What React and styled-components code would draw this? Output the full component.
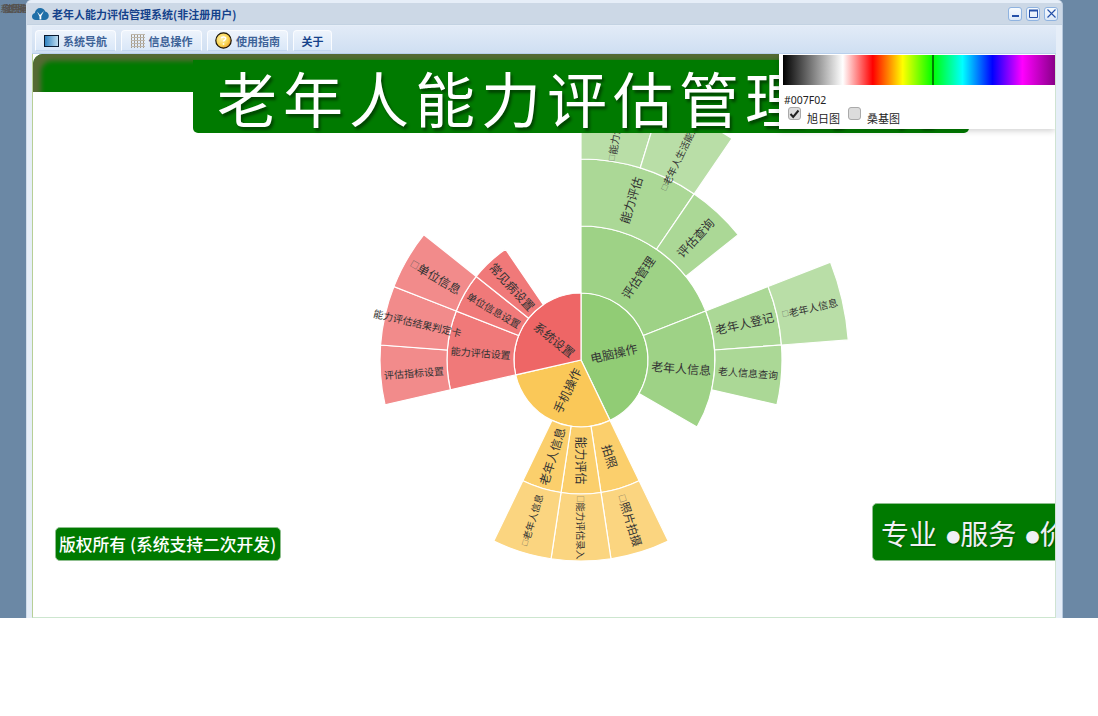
import React from 'react';
import styled, { createGlobalStyle } from 'styled-components';

const GlobalStyle = createGlobalStyle`
    html, body {
        margin: 0;
        padding: 0;
        background: #fff;
        font-family: "Noto Sans CJK SC", "Liberation Sans", sans-serif;
    }
`;

const CX = 548;
const CY = 306;
const RINGS = [[0, 67], [67, 134], [134, 201], [201, 268]];
const OPACITY = [1, 0.88, 0.76, 0.64];
const U = 360 / 21;

const GREEN = '#91cc75';
const ORANGE = '#fac858';
const RED = '#ee6666';

// depth, start unit, end unit, colour, label, font size
const sectors = [
    [0, 0, 9, GREEN, '电脑操作', 12],
    [1, 0, 4, GREEN, '评估管理', 12],
    [1, 4, 7, GREEN, '老年人信息', 12],
    [2, 0, 2, GREEN, '能力评估', 12],
    [2, 2, 3, GREEN, '评估查询', 12],
    [2, 4, 5, GREEN, '老年人登记', 12],
    [2, 5, 6, GREEN, '老人信息查询', 10],
    [3, 0, 1, GREEN, '□能力评估录入', 10],
    [3, 1, 2, GREEN, '□老年人生活能力评估', 9.5],
    [3, 4, 5, GREEN, '□老年人信息', 10],
    [0, 9, 15, ORANGE, '手机操作', 12],
    [1, 9, 10, ORANGE, '拍照', 12],
    [1, 10, 11, ORANGE, '能力评估', 12],
    [1, 11, 12, ORANGE, '老年人信息', 12],
    [2, 9, 10, ORANGE, '□照片拍摄', 11.5],
    [2, 10, 11, ORANGE, '□能力评估录入', 9.5],
    [2, 11, 12, ORANGE, '□老年人信息', 9.5],
    [0, 15, 21, RED, '系统设置', 12],
    [1, 15, 17, RED, '能力评估设置', 10],
    [1, 17, 18, RED, '单位信息设置', 10],
    [1, 18, 19, RED, '常见病设置', 12],
    [2, 15, 16, RED, '评估指标设置', 10],
    [2, 16, 17, RED, '能力评估结果判定卡', 10],
    [2, 17, 18, RED, '□单位信息', 12],
];

const polar = (r, deg) => {
    const a = (deg * Math.PI) / 180;
    return [CX + r * Math.sin(a), CY - r * Math.cos(a)];
};

const arcPath = (r0, r1, a0, a1) => {
    const large = a1 - a0 > 180 ? 1 : 0;
    const [x0, y0] = polar(r1, a0);
    const [x1, y1] = polar(r1, a1);
    const [x2, y2] = polar(r0, a1);
    const [x3, y3] = polar(r0, a0);
    if (r0 === 0) {
        return `M${CX} ${CY}L${x0} ${y0}A${r1} ${r1} 0 ${large} 1 ${x1} ${y1}Z`;
    }
    return `M${x0} ${y0}A${r1} ${r1} 0 ${large} 1 ${x1} ${y1}L${x2} ${y2}A${r0} ${r0} 0 ${large} 0 ${x3} ${y3}Z`;
};

const Sunburst = () => (
    <ChartSvg viewBox="0 0 1023 563">
        {sectors.map(([depth, s, e, color]) => (
            <path
                key={`${depth}-${s}-${color}`}
                d={arcPath(RINGS[depth][0], RINGS[depth][1], s * U, e * U)}
                fill={color}
                fillOpacity={OPACITY[depth]}
                stroke="#fff"
                strokeWidth="1.2"
            />
        ))}
        {sectors.map(([depth, s, e, , label, size]) => {
            const mid = ((s + e) / 2) * U;
            const r = (RINGS[depth][0] + RINGS[depth][1]) / 2;
            const [x, y] = polar(r, mid);
            const rot = mid <= 180 ? mid - 90 : mid - 270;
            const missing = label.startsWith('□');
            return (
                <ChartLabel
                    key={label + s + depth}
                    x={x}
                    y={y}
                    fontSize={size}
                    transform={`rotate(${rot} ${x} ${y})`}
                >
                    {missing && <tspan fontSize={size * 0.7} fill="#555">□</tspan>}
                    {missing ? label.slice(1) : label}
                </ChartLabel>
            );
        })}
    </ChartSvg>
);

const AppLogo = () => (
    <svg width="17" height="14" viewBox="0 0 17 14">
        <path d="M4 13C1.500 13 0 11.400 0 9.400 0 7.600 1.200 6.300 2.800 6 3.200 3 5.400 1 8.200 1c2.400 0 4.300 1.400 5 3.500 2 .3 3.600 2 3.600 4.200 0 2.500-1.900 4.300-4.300 4.300Z" fill="#1f6fa8" />
        <path d="M5 4.500l3 3.500L12 4l-2.700 5V12.500H7.500V9.500Z" fill="#fff" />
    </svg>
);

const MonitorIcon = () => (
    <svg width="15" height="12" viewBox="0 0 15 12">
        <defs>
            <linearGradient id="screen" x1="0" y1="0" x2="1" y2="0">
                <stop offset="0" stopColor="#2a7fc0" />
                <stop offset="1" stopColor="#c4e0f2" />
            </linearGradient>
        </defs>
        <rect x="0.5" y="0.5" width="14" height="11" fill="url(#screen)" stroke="#0a1a30" />
    </svg>
);

const GridIcon = () => (
    <svg width="14" height="14" viewBox="0 0 14 14">
        {[0.5, 3.5, 6.5, 9.5, 12.5].map((v) => (
            <path key={`v${v}`} d={`M${v} 0V14`} stroke="#a39b8c" strokeWidth="1" />
        ))}
        {[0.5, 3.5, 6.5, 9.5, 12.5].map((v) => (
            <path key={`h${v}`} d={`M0 ${v}H14`} stroke="#bdb6aa" strokeWidth="1" />
        ))}
    </svg>
);

const HelpIcon = () => (
    <svg width="17" height="17" viewBox="0 0 17 17">
        <defs>
            <radialGradient id="coin" cx="0.4" cy="0.4" r="0.65">
                <stop offset="0" stopColor="#fff3b0" />
                <stop offset="0.65" stopColor="#f9d34f" />
                <stop offset="1" stopColor="#e8912a" />
            </radialGradient>
        </defs>
        <circle cx="8.500" cy="8.500" r="7.700" fill="url(#coin)" stroke="#1a1408" strokeWidth="1.200" />
        <path d="M6.300 6.300c.5-1.800 4.400-1.800 4.400.3 0 1.500-2.200 1.400-2.200 3M8.500 11.300v1.500" fill="none" stroke="#fff" strokeWidth="1.500" />
    </svg>
);

const App = () => {
    return (
        <>
            <GlobalStyle />
            <Desktop>
                <Scribble>
                    <span>系统导航</span>
                    <span>信息操作</span>
                    <span>使用指南</span>
                </Scribble>
                <Window>
                    <TitleBar>
                        <AppLogo />
                        <Title>老年人能力评估管理系统(非注册用户)</Title>
                        <WinButtons>
                            <WinButton aria-label="最小化">
                                <svg width="9" height="9" viewBox="0 0 9 9"><path d="M1 7H8" stroke="#2450a8" strokeWidth="2" /></svg>
                            </WinButton>
                            <WinButton aria-label="最大化">
                                <svg width="9" height="9" viewBox="0 0 9 9"><path d="M.5 1.500H8.500V8.500H.5Z" fill="none" stroke="#2450a8" strokeWidth="1" /><path d="M0 1.500H9" stroke="#2450a8" strokeWidth="2" /></svg>
                            </WinButton>
                            <WinButton aria-label="关闭">
                                <svg width="9" height="9" viewBox="0 0 9 9"><path d="M.5 .5L8.500 8.500M8.500 .5L.5 8.500" stroke="#2450a8" strokeWidth="1.100" /></svg>
                            </WinButton>
                        </WinButtons>
                    </TitleBar>
                    <Toolbar>
                        <Tab $width={81}><MonitorIcon /><TabText>系统导航</TabText></Tab>
                        <Tab $width={81}><GridIcon /><TabText>信息操作</TabText></Tab>
                        <Tab $width={81}><HelpIcon /><TabText>使用指南</TabText></Tab>
                        <Tab $width={39}><TabText $dark>关于</TabText></Tab>
                    </Toolbar>
                    <Content>
                        <Sunburst />
                        <TopBand />
                        <Banner>老年人能力评估管理系统</Banner>
                        <Picker>
                            <Spectrum><SpectrumMark /></Spectrum>
                            <ColorCode>#007F02</ColorCode>
                            <ChartOptions>
                                <FakeCheck $checked>
                                    <svg width="11" height="10" viewBox="0 0 11 10"><path d="M1.500 5L4.200 8 9.500 1.500" fill="none" stroke="#222" strokeWidth="2" /></svg>
                                </FakeCheck>
                                <OptionText>旭日图</OptionText>
                                <FakeCheck />
                                <OptionText>桑基图</OptionText>
                            </ChartOptions>
                        </Picker>
                        <CopyTag>版权所有 (系统支持二次开发)</CopyTag>
                        <SloganTag>专业 <Bullet>●</Bullet>服务 <Bullet>●</Bullet>价值</SloganTag>
                    </Content>
                </Window>
            </Desktop>
        </>
    );
};

//Styles:
const Desktop = styled.div`
    position: relative;
    box-sizing: border-box;
    height: 618px;
    padding-left: 26px;
    background: #6b88a5;
    overflow: hidden;
`;

const Scribble = styled.div`
    position: absolute;
    left: 0;
    top: 3px;
    width: 26px;
    height: 12px;
    overflow: hidden;
    color: #55504c;

    span {
        position: absolute;
        left: 0;
        top: 0;
        font-size: 9px;
        line-height: 12px;
        white-space: nowrap;
        letter-spacing: -1.5px;
    }
    span:nth-child(2) { left: 2px; }
    span:nth-child(3) { left: 4px; }
`;

const Window = styled.div`
    box-sizing: border-box;
    display: flex;
    flex-direction: column;
    width: 1037px;
    height: 618px;
    padding: 3px 6px 0 5px;
    background: #e6eef8;
    border-left: 1px solid #cfdbe9;
    border-right: 1px solid #b7c9dd;
    border-radius: 5px 5px 0 0;
`;

const TitleBar = styled.div`
    display: flex;
    align-items: center;
    gap: 3px;
    flex: none;
    height: 21px;
    margin: 0 -6px 0 -5px;
    padding: 0 4px 0 5px;
    background: #ccd8e6;
    border-bottom: 1px solid #c3d2e2;
`;

const Title = styled.div`
    font-size: 11px;
    font-weight: 700;
    color: #15428b;
    flex: 1;
`;

const WinButtons = styled.div`
    display: flex;
    gap: 4px;
`;

const WinButton = styled.div`
    box-sizing: border-box;
    display: flex;
    align-items: center;
    justify-content: center;
    width: 14px;
    height: 14px;
    background: linear-gradient(#f7fbff, #dce8f7);
    border: 1px solid #8fb3e0;
    border-radius: 3px;
`;

const Toolbar = styled.div`
    display: flex;
    align-items: flex-end;
    gap: 5px;
    flex: none;
    box-sizing: border-box;
    height: 28px;
    margin-top: 1px;
    padding: 0 0 2px 3px;
    background: linear-gradient(#e2ebf7, #cfdff2);
    border-bottom: 1px solid #b9d0ec;
`;

const Tab = styled.div`
    box-sizing: border-box;
    display: flex;
    align-items: center;
    justify-content: center;
    gap: 4px;
    width: ${(p) => p.$width}px;
    height: 21px;
    background: linear-gradient(#eef4fc, #d9e7f8);
    border: 1px solid #fafcff;
    border-bottom-color: #c3d7f0;
    border-radius: 4px 4px 0 0;
`;

const TabText = styled.span`
    font-size: 11px;
    font-weight: 700;
    color: ${(p) => (p.$dark ? '#15428b' : '#3e6398')};
`;

const Content = styled.div`
    position: relative;
    flex: 1;
    min-height: 0;
    overflow: hidden;
    background: #fff;
    border-left: 1px solid #b7cf96;
    border-right: 1px solid #cfe3d2;
    border-bottom: 1px solid #cde6cf;
`;

const ChartSvg = styled.svg`
    display: block;
    width: 1023px;
    height: 563px;
`;

const ChartLabel = styled.text`
    fill: #333;
    text-anchor: middle;
    dominant-baseline: central;
    font-family: "Noto Sans CJK SC", sans-serif;
`;

const TopBand = styled.div`
    position: absolute;
    left: 0;
    right: 0;
    top: 0;
    height: 38px;
    background: #007a00;
    border-radius: 10px 0 0 0;
    box-shadow: inset 9px 8px 5px -1px rgba(90, 105, 55, 0.95);
`;

const Banner = styled.div`
    position: absolute;
    left: 160px;
    top: 6px;
    box-sizing: border-box;
    width: 776px;
    height: 73px;
    padding-left: 24px;
    background: #007a00;
    border-radius: 0 0 5px 5px;
    color: #fff;
    font-size: 60px;
    line-height: 73px;
    letter-spacing: 6px;
    white-space: nowrap;
    text-shadow: 2px 3px 3px rgba(0, 0, 0, 0.45);
`;

const Picker = styled.div`
    position: absolute;
    top: 0;
    right: 0;
    box-sizing: border-box;
    width: 276px;
    height: 75px;
    padding: 1px 0 0 4px;
    background: #fff;
    box-shadow: 0 2px 6px rgba(0, 0, 0, 0.18);
`;

const Spectrum = styled.div`
    position: relative;
    height: 30px;
    background: linear-gradient(90deg, #000 0%, #fff 22%, #f00 33%, #ff0 44%, #0f0 55%, #0ff 66%, #00f 77%, #f0f 88%, #808 100%);
`;

const SpectrumMark = styled.div`
    position: absolute;
    left: 149px;
    top: 0;
    width: 2px;
    height: 30px;
    background: #007f02;
`;

const ColorCode = styled.div`
    margin-top: 8px;
    padding-left: 1px;
    font-family: "Noto Sans", sans-serif;
    font-size: 10.5px;
    line-height: 14px;
    color: #222;
`;

const ChartOptions = styled.div`
    display: flex;
    align-items: flex-start;
    padding-left: 5px;
`;

const FakeCheck = styled.div`
    box-sizing: border-box;
    display: flex;
    align-items: center;
    justify-content: center;
    width: 13px;
    height: 13px;
    background: #dcdcdc;
    border: 1px solid #aaa;
    border-radius: 3px;
`;

const OptionText = styled.span`
    margin: 4px 8px 0 6px;
    font-size: 11px;
    line-height: 14px;
    color: #222;
`;

const CopyTag = styled.div`
    position: absolute;
    left: 22px;
    top: 473px;
    box-sizing: border-box;
    height: 34px;
    padding: 0 4px 0 3px;
    background: #007a00;
    border: 1px solid #8fbf8f;
    border-radius: 5px;
    color: #fff;
    font-size: 16.8px;
    font-weight: 500;
    line-height: 32px;
    white-space: nowrap;
`;

const SloganTag = styled.div`
    position: absolute;
    left: 839px;
    top: 449px;
    box-sizing: border-box;
    width: 240px;
    height: 58px;
    padding-left: 8px;
    background: #007a00;
    border: 1px solid #8fbf8f;
    border-radius: 5px;
    color: #f0f0f5;
    font-size: 28px;
    line-height: 58px;
    white-space: nowrap;
    text-shadow: 1px 1px 2px rgba(0, 0, 0, 0.3);
`;

const Bullet = styled.span`
    display: inline-block;
    width: 14px;
    margin-left: 3px;
    font-size: 14px;
    line-height: 1;
    vertical-align: 3px;
    text-align: center;
`;

export default App;
